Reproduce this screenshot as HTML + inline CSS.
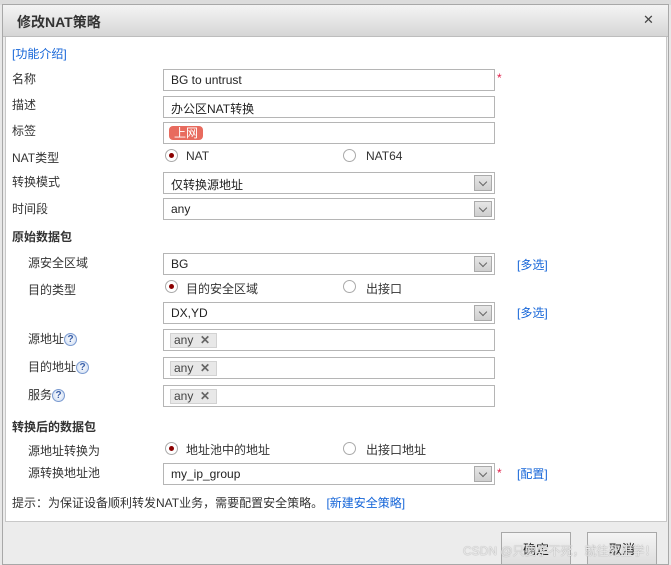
<!DOCTYPE html>
<html><head><meta charset="utf-8"><style>
*{box-sizing:border-box;margin:0;padding:0}
body{width:671px;height:565px;overflow:hidden;background:#e8e8e8;font-family:"Liberation Sans","Noto Sans CJK SC",sans-serif;font-size:12px;color:#333;position:relative}
.a{position:absolute;white-space:nowrap}
.top{left:0;top:0;width:671px;height:5px;background:#dcdcdc}
.dlg{left:2px;top:4px;width:667px;height:561px;border:1px solid #a8a8a8;background:#ececec}
.title{left:3px;top:5px;width:665px;height:32px;background:linear-gradient(#f4f4f4,#d6d6d6);border-bottom:1px solid #bdbdbd}
.title span{position:absolute;left:14px;top:7px;font-size:14px;font-weight:bold;color:#333}
.body{left:5px;top:37px;width:662px;height:485px;background:#fff;border:1px solid #c8c8c8;border-top:none}
.lbl{font-size:12px;color:#333}
.in{left:163px;width:332px;height:22px;border:1px solid #b5b5b5;background:#fff;padding:3px 7px;font-size:12px;color:#222}
.dd{position:absolute;right:2px;top:2px;width:18px;height:16px;border:1px solid #aaa;background:linear-gradient(#e6e6e6,#cfcfcf)}
.dd:after{content:"";position:absolute;left:5px;top:3px;width:5px;height:5px;border-right:1.5px solid #666;border-bottom:1.5px solid #666;transform:rotate(45deg)}
.rad{width:13px;height:13px;border:1px solid #aaa;border-radius:50%;background:#fff}
.rad.on:after{content:"";position:absolute;left:3px;top:3px;width:5px;height:5px;border-radius:50%;background:#8b0000}
.lnk{color:#1565d8}
.h{font-weight:bold;color:#333}
.tag{position:absolute;left:6px;top:3px;height:15px;padding:0 6px 0 3px;background:#e8e8e8;border:1px solid #d2d2d2;font-size:12px;line-height:13px;color:#444}
.q{display:inline-block;width:13px;height:13px;border-radius:50%;border:1px solid #7a9ad0;background:radial-gradient(#fff,#c8d8f0);color:#3a5fa8;font-size:10px;font-weight:bold;text-align:center;line-height:11px;vertical-align:1px}
.btn{top:532px;width:70px;height:33px;border:1px solid #a8a8a8;background:linear-gradient(#f4f4f4,#dedede);text-align:center;font-size:13px;padding-top:6px;color:#222}
.star{color:#e0204a}
</style></head><body>
<div class="a top"></div>
<div class="a dlg"></div>
<div class="a title"><span>修改NAT策略</span><span style="left:640px;top:7px;font-weight:normal;font-size:13px;color:#444">✕</span></div>
<div class="a body"></div>

<div class="a lnk" style="left:12px;top:45px">[功能介绍]</div>

<div class="a lbl" style="left:12px;top:70px">名称</div>
<div class="a in" style="top:69px">BG to untrust</div>
<div class="a star" style="left:497px;top:71px">*</div>

<div class="a lbl" style="left:12px;top:96px">描述</div>
<div class="a in" style="top:96px">办公区NAT转换</div>

<div class="a lbl" style="left:12px;top:122px">标签</div>
<div class="a in" style="top:122px"><span style="position:absolute;left:5px;top:3px;height:14px;padding:0 5px;background:#e86b5e;color:#fff;border-radius:4px;line-height:14px">上网</span></div>

<div class="a lbl" style="left:12px;top:149px">NAT类型</div>
<div class="a rad on" style="left:165px;top:149px"></div><div class="a" style="left:186px;top:149px">NAT</div>
<div class="a rad" style="left:343px;top:149px"></div><div class="a" style="left:366px;top:149px">NAT64</div>

<div class="a lbl" style="left:12px;top:173px">转换模式</div>
<div class="a in" style="top:172px">仅转换源地址<div class="dd"></div></div>

<div class="a lbl" style="left:12px;top:200px">时间段</div>
<div class="a in" style="top:198px">any<div class="dd"></div></div>

<div class="a h" style="left:12px;top:228px">原始数据包</div>

<div class="a lbl" style="left:28px;top:254px">源安全区域</div>
<div class="a in" style="top:253px">BG<div class="dd"></div></div>
<div class="a lnk" style="left:517px;top:256px">[多选]</div>

<div class="a lbl" style="left:28px;top:281px">目的类型</div>
<div class="a rad on" style="left:165px;top:280px"></div><div class="a" style="left:186px;top:280px">目的安全区域</div>
<div class="a rad" style="left:343px;top:280px"></div><div class="a" style="left:366px;top:280px">出接口</div>

<div class="a in" style="top:302px">DX,YD<div class="dd"></div></div>
<div class="a lnk" style="left:517px;top:304px">[多选]</div>

<div class="a lbl" style="left:28px;top:330px">源地址<span class="q">?</span></div>
<div class="a in" style="top:329px"><span class="tag">any &nbsp;<b style="color:#666">✕</b></span></div>

<div class="a lbl" style="left:28px;top:358px">目的地址<span class="q">?</span></div>
<div class="a in" style="top:357px"><span class="tag">any &nbsp;<b style="color:#666">✕</b></span></div>

<div class="a lbl" style="left:28px;top:386px">服务<span class="q">?</span></div>
<div class="a in" style="top:385px"><span class="tag">any &nbsp;<b style="color:#666">✕</b></span></div>

<div class="a h" style="left:12px;top:418px">转换后的数据包</div>

<div class="a lbl" style="left:28px;top:442px">源地址转换为</div>
<div class="a rad on" style="left:165px;top:442px"></div><div class="a" style="left:186px;top:441px">地址池中的地址</div>
<div class="a rad" style="left:343px;top:442px"></div><div class="a" style="left:366px;top:441px">出接口地址</div>

<div class="a lbl" style="left:28px;top:464px">源转换地址池</div>
<div class="a in" style="top:463px">my_ip_group<div class="dd"></div></div>
<div class="a star" style="left:497px;top:466px">*</div>
<div class="a lnk" style="left:517px;top:465px">[配置]</div>

<div class="a" style="left:12px;top:494px">提示：为保证设备顺利转发NAT业务，需要配置安全策略。 <span class="lnk">[新建安全策略]</span></div>

<div class="a btn" style="left:501px">确定</div>
<div class="a btn" style="left:587px">取消</div>
<div class="a" style="left:463px;top:542px;color:rgba(240,240,240,0.9);font-size:12px;text-shadow:0 0 1px #888">CSDN @只要学不死，就往死里学！</div>
</body></html>
